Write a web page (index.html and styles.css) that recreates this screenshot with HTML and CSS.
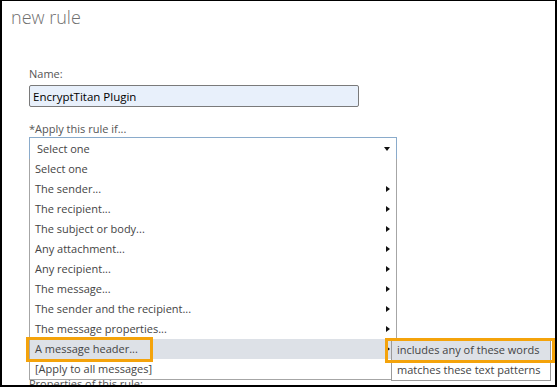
FILE: index.html
```
<!DOCTYPE html>
<html lang="en">
<head>
<meta charset="utf-8">
<title>new rule</title>
<link rel="stylesheet" href="styles.css">
</head>
<body>
<div class="frame">
  <h1 class="title">new rule</h1>
  <form class="form">
    <label class="label" for="name">Name:</label>
    <input class="text-input" id="name" type="text" value="EncryptTitan Plugin">
    <div class="label label-apply">*Apply this rule if...</div>
    <div class="select">
      <span class="select-value">Select one</span>
      <span class="caret-down"></span>
      <ul class="menu">
        <li class="menu-item">Select one</li>
        <li class="menu-item">The sender...<span class="caret-right"></span></li>
        <li class="menu-item">The recipient...<span class="caret-right"></span></li>
        <li class="menu-item">The subject or body...<span class="caret-right"></span></li>
        <li class="menu-item">Any attachment...<span class="caret-right"></span></li>
        <li class="menu-item">Any recipient...<span class="caret-right"></span></li>
        <li class="menu-item">The message...<span class="caret-right"></span></li>
        <li class="menu-item">The sender and the recipient...<span class="caret-right"></span></li>
        <li class="menu-item">The message properties...<span class="caret-right"></span></li>
        <li class="menu-item is-active">A message header...<span class="caret-right"></span>
          <ul class="submenu">
            <li class="submenu-item is-active">includes any of these words</li>
            <li class="submenu-item">matches these text patterns</li>
          </ul>
          <span class="callout callout-item"></span>
          <span class="callout callout-sub"></span>
        </li>
        <li class="menu-item">[Apply to all messages]</li>
      </ul>
    </div>
    <div class="label label-props">Properties of this rule:</div>
  </form>
</div>
</body>
</html>
```
FILE: styles.css
```
* { box-sizing: border-box; }
html, body { margin: 0; padding: 0; background: #fff; }
body { font-family: "Open Sans", "Noto Sans", sans-serif; }

.frame {
  width: 557px;
  height: 387px;
  border-style: solid;
  border-color: #000;
  border-width: 1px 2px 2px 2px;
  overflow: hidden;
  background: #fff;
}

.title {
  margin: 0;
  padding: 5px 0 0 9px;
  font-size: 18px;
  line-height: 22px;
  font-weight: 300;
  color: #6f6f6f;
}

.form {
  margin: 39px 0 0 27px;
}

.label {
  display: block;
  font-size: 11px;
  line-height: 14px;
  color: #555;
}

.text-input {
  display: block;
  margin: 4px 0 0 0;
  width: 330px;
  height: 22px;
  padding: 0 0 0 3px;
  border: 1px solid #7a7a7a;
  border-radius: 2px;
  background: #e8f0fb;
  font-family: "Open Sans", "Noto Sans", sans-serif;
  font-size: 11.5px;
  color: #000;
  outline: none;
}

.label-apply { margin-top: 15px; }

.select {
  position: relative;
  margin-top: 1px;
  width: 368px;
  height: 23px;
  border: 1px solid #8aabcb;
  display: flex;
  align-items: center;
  justify-content: space-between;
  padding: 0 6px 0 7px;
  font-size: 11px;
  color: #444;
}

.select-value { line-height: 20px; }

.caret-down {
  width: 0;
  height: 0;
  border-left: 3.5px solid transparent;
  border-right: 3.5px solid transparent;
  border-top: 4px solid #111;
}

.menu {
  position: absolute;
  top: 100%;
  left: -1px;
  width: 368px;
  margin: 0;
  padding: 0;
  list-style: none;
  background: #fff;
  border: 1px solid #a6a6a6;
  border-top: 0;
}

.menu-item {
  position: relative;
  display: flex;
  align-items: center;
  justify-content: space-between;
  height: 20px;
  padding: 0 6px 0 5px;
  font-size: 11px;
  line-height: 20px;
  color: #444;
}

.menu-item.is-active { background: #dde1e7; }

.caret-right {
  width: 0;
  height: 0;
  border-top: 3.5px solid transparent;
  border-bottom: 3.5px solid transparent;
  border-left: 4px solid #111;
}

.submenu {
  position: absolute;
  top: 0;
  left: 361px;
  width: 160px;
  margin: 0;
  padding: 0;
  list-style: none;
  background: #fff;
  border: 1px solid #9a9a9a;
  z-index: 1;
}

.submenu-item {
  height: 20px;
  padding: 0 0 0 5px;
  font-size: 11px;
  line-height: 20px;
  color: #444;
  white-space: nowrap;
}

.submenu-item.is-active { background: #dde1e7; }

.callout {
  position: absolute;
  border: 3px solid #f4a30b;
  z-index: 2;
}

.callout-item { left: -4px; top: -2px; width: 127px; height: 25px; }
.callout-sub { left: 355px; top: -1px; width: 170px; height: 25px; }

.label-props { margin-top: 217px; }
```
